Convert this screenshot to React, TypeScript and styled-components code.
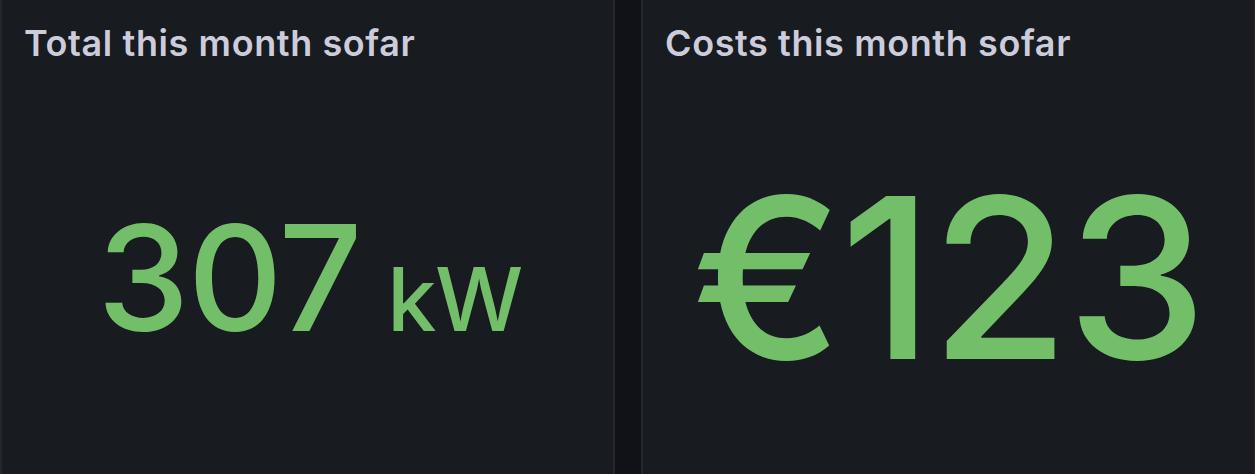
import React from 'react';
import styled, { createGlobalStyle } from 'styled-components';

const GlobalStyle = createGlobalStyle`
  html, body {
    margin: 0;
    padding: 0;
    background: #111217;
    overflow: hidden;
  }
  body {
    font-family: Inter, "Noto Sans", "Liberation Sans", sans-serif;
  }
`;

const Board = styled.div`
  display: grid;
  grid-template-columns: 615px 615px;
  column-gap: 26px;
  height: 490px;
  margin-top: -4px;
`;

const Panel = styled.section`
  display: flex;
  flex-direction: column;
  background: #181b1f;
  border: 2px solid #24262c;
  border-radius: 4px;
  box-sizing: border-box;
  min-width: 0;
`;

const Title = styled.h2`
  margin: 0;
  padding: 21px 22px 0;
  font-size: 36px;
  font-weight: 600;
  line-height: 48px;
  letter-spacing: 0.6px;
  color: #ccccdc;
  white-space: nowrap;
`;

const Body = styled.div`
  flex: 1;
  display: flex;
  align-items: center;
  justify-content: center;
  padding-top: 4px;
`;

const Value = styled.div<{ $size: number; $shift?: number }>`
  display: flex;
  align-items: baseline;
  color: #73bf69;
  font-size: ${(p) => p.$size}px;
  font-weight: 500;
  line-height: 1;
  letter-spacing: -0.01em;
  margin-left: ${(p) => p.$shift || 0}px;
`;

const Unit = styled.span<{ $size: number }>`
  font-size: ${(p) => p.$size}px;
  margin-left: 0.3em;
`;

interface StatProps {
  title: string;
  value: string;
  size: number;
  unit?: string;
  unitSize?: number;
  shift?: number;
}

const Stat = ({ title, value, size, unit, unitSize, shift }: StatProps): JSX.Element => (
  <Panel>
    <Title>{title}</Title>
    <Body>
      <Value $size={size} $shift={shift}>
        {value}
        {unit && <Unit $size={unitSize || size}>{unit}</Unit>}
      </Value>
    </Body>
  </Panel>
);

const App = (): JSX.Element => (
  <>
    <GlobalStyle />
    <Board>
      <Stat title="Total this month sofar" value="307" size={147} unit="kW" unitSize={88} shift={4} />
      <Stat title="Costs this month sofar" value="€123" size={224} />
    </Board>
  </>
);

export default App;
